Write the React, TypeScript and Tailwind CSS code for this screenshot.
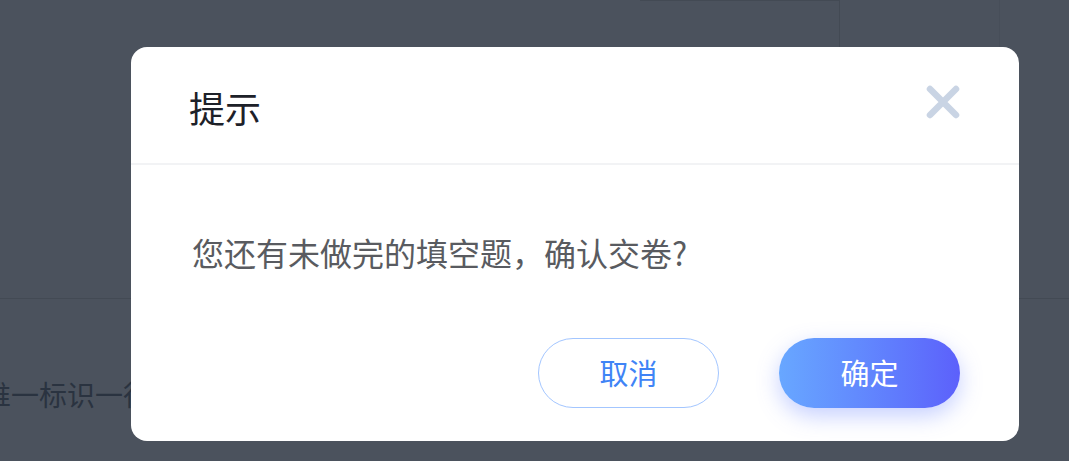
import React from 'react';

const CJK = "font-['Noto_Sans_CJK_SC','Noto_Sans',sans-serif]";

function CloseIcon() {
  return (
    <svg width="36" height="36" viewBox="0 0 36 36" fill="none">
      <path d="M5 5 L31 31 M31 5 L5 31" stroke="#c9d4e4" strokeWidth="6.5" strokeLinecap="round" />
    </svg>
  );
}

export default function App() {
  return (
    <div className={`relative w-[1069px] h-[461px] overflow-hidden bg-[#4b525d] ${CJK}`}>
      {/* page underneath the mask */}
      <div className="flex flex-col h-full">
        <div className="flex h-[50px]">
          <div className="w-[640px]" />
          <div className="w-[200px] border-t border-r border-[#434a54]" />
          <div className="w-[160px] border-r border-[#474e59]" />
          <div className="flex-1" />
        </div>
        <div className="h-[248px]" />
        <div className="border-t border-[#434a54]" />
        <div className="h-[82px]" />
        <div className="ml-[-17px] text-[28px] leading-[32px] text-[#2a3340] font-['Liberation_Serif','Noto_Sans_CJK_SC',serif] whitespace-nowrap">
          唯一标识一行
        </div>
      </div>

      {/* dialog */}
      <div className="absolute left-[131px] top-[47px] w-[888px] h-[394px] bg-white rounded-[16px] flex flex-col">
        <div className="h-[118px] px-[59px] flex items-center justify-between border-b-2 border-[#f2f3f5]">
          <div className="text-[36px] leading-none text-[#1d2129] pt-[4px] ml-[-1px]">提示</div>
          <div className="mr-[-1px] mt-[-6px]">
            <CloseIcon />
          </div>
        </div>
        <div className="pl-[61px] pt-[63px] text-[32px] leading-[48px] text-[#595b60] whitespace-nowrap">
          您还有未做完的填空题，确认交卷?
        </div>
        <div className="flex-1" />
        <div className="flex justify-end gap-[60px] pr-[59px] pb-[33px]">
          <button className="w-[181px] h-[70px] rounded-full border border-[#a3c6ff] bg-white text-[29px] text-[#3f84f6]">
            取消
          </button>
          <button className="w-[181px] h-[70px] rounded-full bg-gradient-to-r from-[#68a7ff] to-[#5c60fb] text-[29px] text-white shadow-[0_8px_22px_rgba(92,120,255,0.35)]">
            确定
          </button>
        </div>
      </div>
    </div>
  );
}
